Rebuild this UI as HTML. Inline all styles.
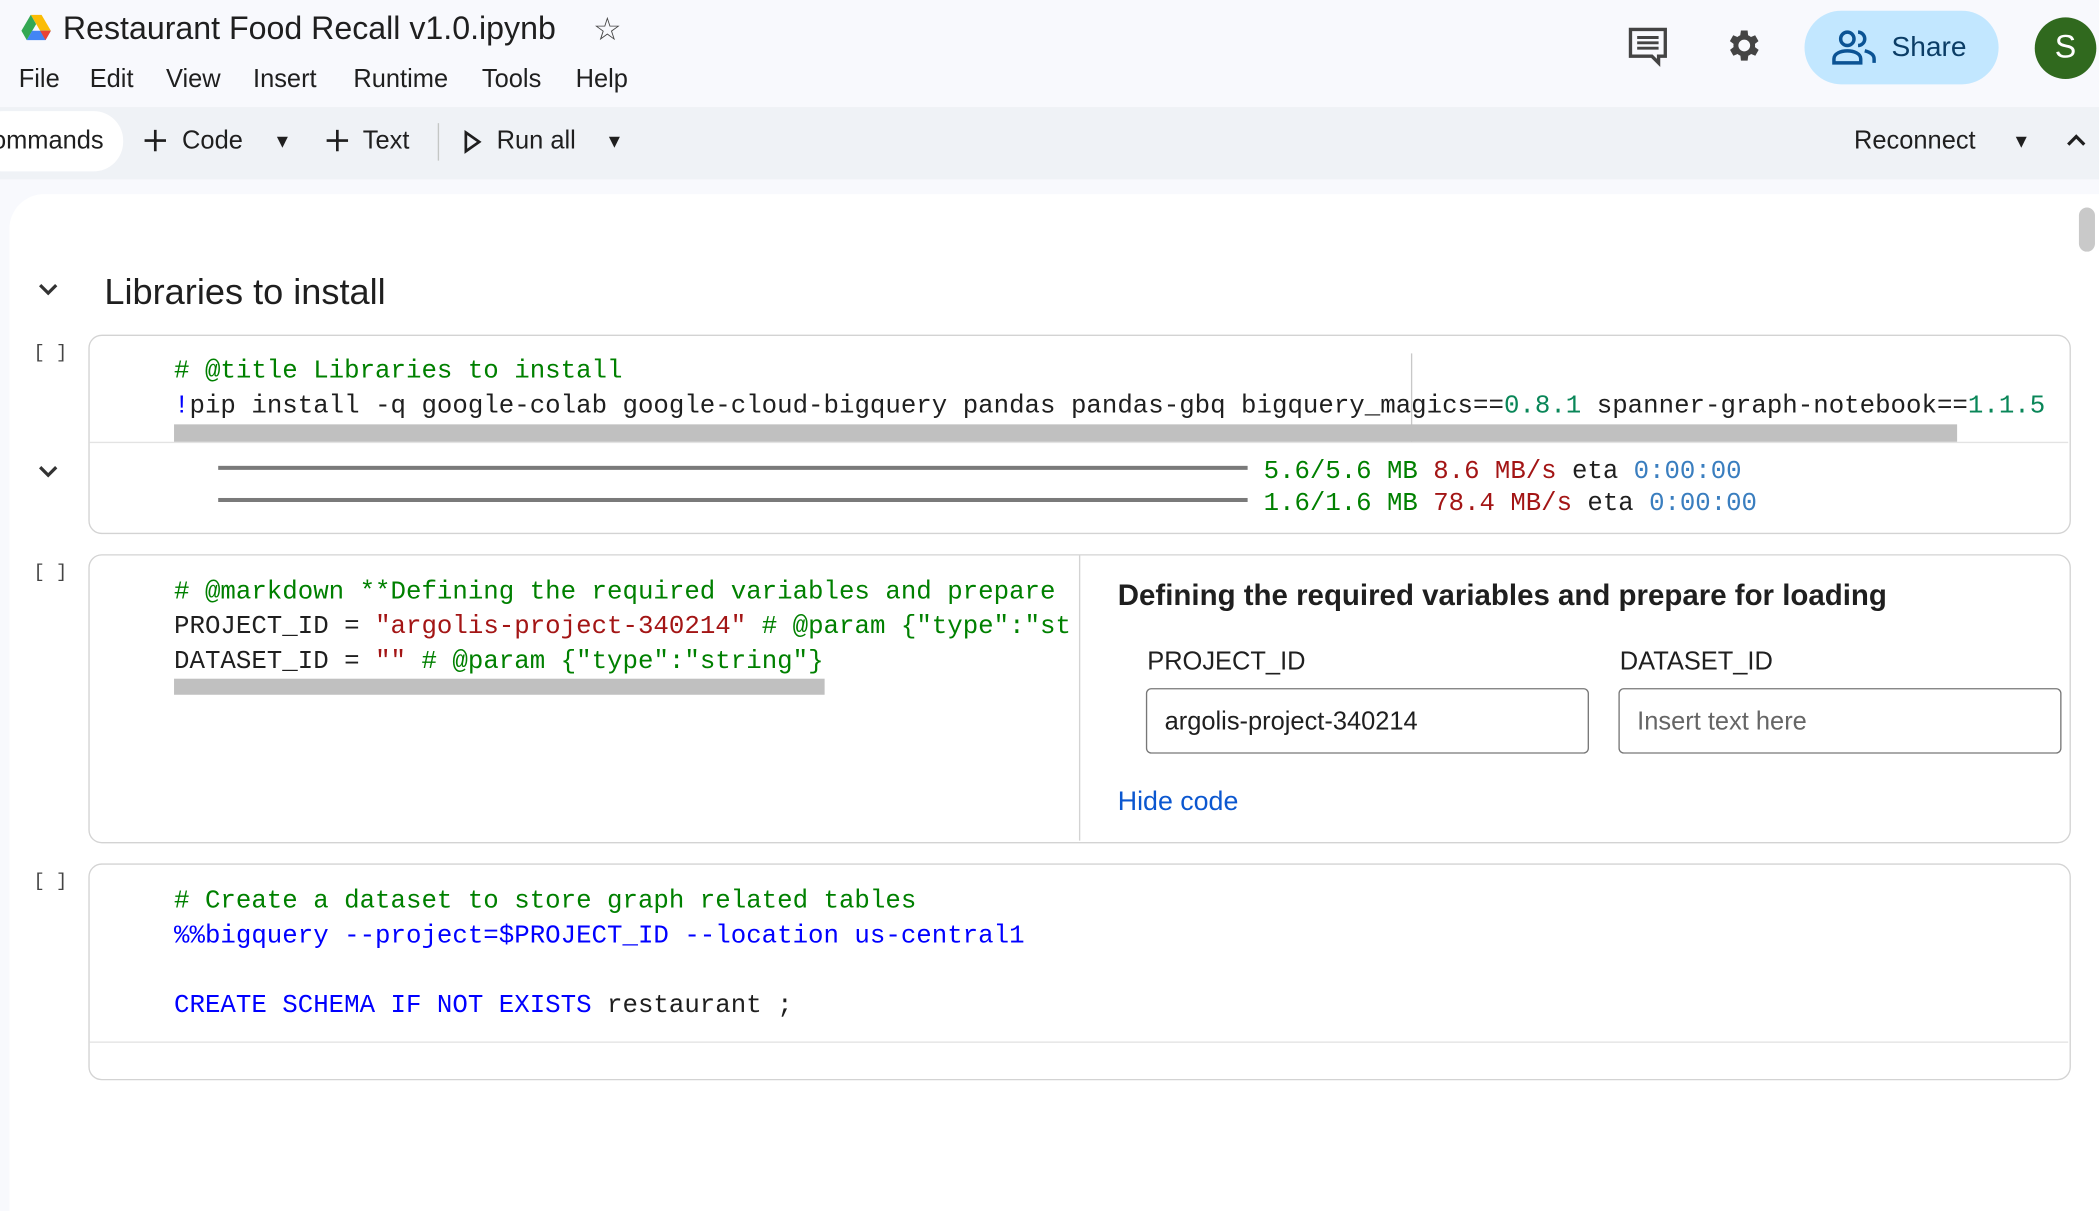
<!DOCTYPE html>
<html><head><meta charset="utf-8"><style>
html,body{margin:0;padding:0;background:#f8f9fd;overflow:hidden;width:2099px;height:1055px}
#w{position:absolute;left:0;top:0;width:1568px;height:788px;transform:scale(1.33865);transform-origin:0 0;font-family:"Liberation Sans",sans-serif;color:#1f1f1f}
.a{position:absolute;white-space:pre}
.m{font-family:"Liberation Mono",monospace;font-size:19.25px;line-height:26px;padding-top:2px}
.c{color:#008000}.k{color:#0000ff}.s{color:#a31515}.n{color:#098658}.t{color:#3a7ebf}.r{color:#a31515}
.cell{position:absolute;border:1px solid #d3d3d3;border-radius:10px;background:#fff}
.br{font-family:"Liberation Mono",monospace;font-size:14px;color:#444}
.d{padding-top:2px}
.tri{font-size:14px}
</style></head><body><div id="w">
<svg class="a" style="left:16px;top:11px" width="22" height="20" viewBox="0 0 22 20"><path d="M7 0h8l7 12h-8z" fill="#fbbc04"/><path d="M7 0L0 12l4 7 7-12z" fill="#34a853"/><path d="M4 19h14l4-7H8z" fill="#4285f4"/><path d="M18 19l4-7h-8z" fill="#ea4335"/></svg>
<div class="a d" style="left:47px;top:6px;font-size:24px">Restaurant Food Recall v1.0.ipynb</div>
<div class="a d" style="left:443px;top:6px;font-size:24px;color:#444">☆</div>
<div class="a d" style="left:14px;top:47px;font-size:19px">File</div>
<div class="a d" style="left:67px;top:47px;font-size:19px">Edit</div>
<div class="a d" style="left:124px;top:47px;font-size:19px">View</div>
<div class="a d" style="left:189px;top:47px;font-size:19px">Insert</div>
<div class="a d" style="left:264px;top:47px;font-size:19px">Runtime</div>
<div class="a d" style="left:360px;top:47px;font-size:19px">Tools</div>
<div class="a d" style="left:430px;top:47px;font-size:19px">Help</div>
<svg class="a" style="left:1216px;top:20px" width="32" height="30" viewBox="0 0 32 30"><path d="M2 2h26v20h-5v5l-5-5H2z" fill="none" stroke="#444" stroke-width="2.5"/><path d="M7 8h16M7 12h16M7 16h16" stroke="#444" stroke-width="2.2"/></svg>
<svg class="a" style="left:1288px;top:19px" width="30" height="30" viewBox="0 0 24 24"><path fill="#444" d="M19.4 13a7.5 7.5 0 000-2l2.1-1.6-2-3.5-2.5 1a7 7 0 00-1.7-1L15 3h-4l-.4 2.9a7 7 0 00-1.7 1l-2.5-1-2 3.5L6.6 11a7.5 7.5 0 000 2l-2.1 1.6 2 3.5 2.5-1a7 7 0 001.7 1L11 21h4l.4-2.9a7 7 0 001.7-1l2.5 1 2-3.5zM13 15.5a3.5 3.5 0 110-7 3.5 3.5 0 010 7z" transform="translate(-1 0)"/></svg>
<div class="a" style="left:1348px;top:8px;width:145px;height:55px;border-radius:28px;background:#c2e7ff"></div>
<svg class="a" style="left:1368px;top:21px" width="36" height="28" viewBox="0 0 36 28"><circle cx="12" cy="8" r="5" fill="none" stroke="#0b5394" stroke-width="2.6"/><path d="M2 26v-3c0-4 5-6 10-6s10 2 10 6v3z" fill="none" stroke="#0b5394" stroke-width="2.6"/><path d="M20 3a5 5 0 010 10M25 17c4 1 7 3 7 6v3" fill="none" stroke="#0b5394" stroke-width="2.6"/></svg>
<div class="a d" style="left:1413px;top:22px;font-size:21px;color:#0b3d66">Share</div>
<div class="a" style="left:1520px;top:13px;width:46px;height:46px;border-radius:50%;background:#30691e;color:#fff;font-size:24px;text-align:center;line-height:46px">S</div>
<div class="a" style="left:0;top:80px;width:1568px;height:54px;background:#eff2f6"></div>
<div class="a" style="left:-20px;top:83px;width:112px;height:45px;border-radius:22px;background:#fff"></div>
<div class="a d" style="left:-6px;top:93px;font-size:19px">ommands</div>
<div class="a" style="left:108px;top:104px;width:16px;height:2px;background:#1f1f1f"></div>
<div class="a" style="left:115px;top:97px;width:2px;height:16px;background:#1f1f1f"></div>
<div class="a d" style="left:136px;top:93px;font-size:19px">Code</div>
<div class="a tri" style="left:204px;top:97px">▼</div>
<div class="a" style="left:244px;top:104px;width:16px;height:2px;background:#1f1f1f"></div>
<div class="a" style="left:251px;top:97px;width:2px;height:16px;background:#1f1f1f"></div>
<div class="a d" style="left:271px;top:93px;font-size:19px">Text</div>
<div class="a" style="left:327px;top:92px;width:1px;height:28px;background:#c4c7c5"></div>
<svg class="a" style="left:346px;top:97px" width="14" height="18" viewBox="0 0 14 18"><path d="M2 2l10 7-10 7z" fill="none" stroke="#1f1f1f" stroke-width="2"/></svg>
<div class="a d" style="left:371px;top:93px;font-size:19px">Run all</div>
<div class="a tri" style="left:452px;top:97px">▼</div>
<div class="a d" style="left:1385px;top:93px;font-size:19px">Reconnect</div>
<div class="a tri" style="left:1503px;top:97px">▼</div>
<svg class="a" style="left:1543px;top:99px" width="16" height="12" viewBox="0 0 16 12"><path d="M2 9l6-6 6 6" fill="none" stroke="#1f1f1f" stroke-width="2.4"/></svg>
<div class="a" style="left:7px;top:145px;width:1561px;height:760px;background:#fff;border-top-left-radius:26px"></div>
<div class="a" style="left:1553px;top:155px;width:12px;height:33px;border-radius:6px;background:#c9c9c9"></div>
<svg class="a" style="left:28px;top:210px" width="16" height="12" viewBox="0 0 16 12"><path d="M2 3l6 6 6-6" fill="none" stroke="#333" stroke-width="2.4"/></svg>
<div class="a d" style="left:78px;top:201px;font-size:27px">Libraries to install</div>
<div class="a br" style="left:25px;top:256px">[ ]</div>
<div class="cell" style="left:66px;top:250px;width:1479px;height:147px"></div>
<div class="a" style="left:67px;top:330px;width:1478px;height:1px;background:#e3e3e3"></div>
<div class="a" style="left:1054px;top:264px;width:1px;height:66px;background:#c8c8c8"></div>
<div class="a m" style="left:130px;top:262px"><span class="c"># @title Libraries to install</span>
<span class="k">!</span>pip install -q google-colab google-cloud-bigquery pandas pandas-gbq bigquery_magics==<span class="n">0.8.1</span> spanner-graph-notebook==<span class="n">1.1.5</span></div>
<div class="a" style="left:130px;top:317px;width:1332px;height:13px;background:#c0c0c0"></div>
<svg class="a" style="left:28px;top:346px" width="16" height="12" viewBox="0 0 16 12"><path d="M2 3l6 6 6-6" fill="none" stroke="#333" stroke-width="2.4"/></svg>
<div class="a" style="left:163px;top:348px;width:769px;height:3px;background:#7a7a7a"></div>
<div class="a" style="left:163px;top:372px;width:769px;height:3px;background:#7a7a7a"></div>
<div class="a m" style="left:944px;top:338px;font-size:19.2px;line-height:24px"><span class="c">5.6/5.6 MB</span> <span class="r">8.6 MB/s</span> eta <span class="t">0:00:00</span>
<span class="c">1.6/1.6 MB</span> <span class="r">78.4 MB/s</span> eta <span class="t">0:00:00</span></div>
<div class="a br" style="left:25px;top:420px">[ ]</div>
<div class="cell" style="left:66px;top:414px;width:1479px;height:214px"></div>
<div class="a" style="left:806px;top:415px;width:1px;height:213px;background:#d3d3d3"></div>
<div class="a m" style="left:130px;top:427px;width:668px;overflow:hidden"><span class="c"># @markdown **Defining the required variables and prepare </span>
PROJECT_ID = <span class="s">"argolis-project-340214"</span> <span class="c"># @param {"type":"st</span>
DATASET_ID = <span class="s">""</span> <span class="c"># @param {"type":"string"}</span></div>
<div class="a" style="left:130px;top:507px;width:486px;height:12px;background:#c0c0c0"></div>
<div class="a d" style="left:835px;top:430px;font-size:22px;font-weight:bold;color:#1f1f1f">Defining the required variables and prepare for loading</div>
<div class="a d" style="left:857px;top:482px;font-size:19px">PROJECT_ID</div>
<div class="a d" style="left:1210px;top:482px;font-size:19px">DATASET_ID</div>
<div class="a" style="left:856px;top:514px;width:329px;height:47px;border:1px solid #777;border-radius:4px"></div>
<div class="a" style="left:1209px;top:514px;width:329px;height:47px;border:1px solid #777;border-radius:4px"></div>
<div class="a d" style="left:870px;top:527px;font-size:19px">argolis-project-340214</div>
<div class="a d" style="left:1223px;top:527px;font-size:19px;color:#666">Insert text here</div>
<div class="a d" style="left:835px;top:586px;font-size:20px;color:#0b57d0">Hide code</div>
<div class="a br" style="left:25px;top:651px">[ ]</div>
<div class="cell" style="left:66px;top:645px;width:1479px;height:160px"></div>
<div class="a" style="left:67px;top:778px;width:1478px;height:1px;background:#e3e3e3"></div>
<div class="a m" style="left:130px;top:658px"><span class="c"># Create a dataset to store graph related tables</span>
<span class="k">%%bigquery --project=$PROJECT_ID --location us-central1</span>

<span class="k">CREATE SCHEMA IF NOT EXISTS</span> restaurant ;</div>
</div></body></html>
